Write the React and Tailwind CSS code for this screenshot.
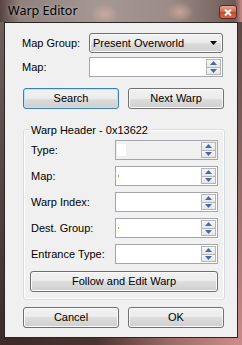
import React from "react";

const font = { fontFamily: '"Liberation Sans", Arial, sans-serif' };

function Btn({ children, w, blue }) {
  return (
    <div
      className={`flex h-[21px] items-center justify-center rounded-[3px] border text-[11px] text-black ${
        blue
          ? "border-[#3c7fb1] shadow-[inset_0_0_0_1px_#bfe3f6]"
          : "border-[#707070] shadow-[inset_0_0_0_1px_#fbfbfb]"
      } bg-[linear-gradient(180deg,#f2f2f2_0%,#ebebeb_50%,#dddddd_50%,#cfcfcf_100%)]`}
      style={{ width: w }}
    >
      {children}
    </div>
  );
}

function Up() {
  return (
    <svg width="7" height="4" viewBox="0 0 7 4">
      <polygon points="0,4 7,4 3.5,0" fill="#4a68a8" />
    </svg>
  );
}
function Down() {
  return (
    <svg width="7" height="4" viewBox="0 0 7 4">
      <polygon points="0,0 7,0 3.5,4" fill="#4a68a8" />
    </svg>
  );
}

function Spin({ w, gray, square, tick }) {
  return (
    <div
      className={`relative flex h-[20px] border border-[#a3a6ad] ${gray ? "bg-[#f0f0f0]" : "bg-white"}`}
      style={{ width: w }}
    >
      <div className="flex flex-1 items-center pl-[1px]">
        {square && <div className="h-[12px] w-[9px] bg-white" />}
        {tick && <div className="ml-[1px] h-[2px] w-[1px] bg-[#e0a030]" />}
      </div>
      <div className="mr-[1px] my-[1px] flex w-[15px] flex-col">
        <div className="flex flex-1 items-center justify-center border border-[#b5b5b5] bg-[linear-gradient(180deg,#f6f6f6,#e6e6e6)]">
          <Up />
        </div>
        <div className="flex flex-1 items-center justify-center border border-t-0 border-[#b5b5b5] bg-[linear-gradient(180deg,#f6f6f6,#e6e6e6)]">
          <Down />
        </div>
      </div>
    </div>
  );
}

function Row({ label, ...p }) {
  return (
    <div className="flex h-[20px] items-center">
      <div className="w-[84px] text-[11px] text-black">{label}</div>
      <Spin w={104} {...p} />
    </div>
  );
}

export default function App() {
  return (
    <div
      className="relative h-[345px] w-[242px] overflow-hidden bg-[radial-gradient(ellipse_14px_10px_at_105px_14px,#c9a99c,transparent),radial-gradient(ellipse_14px_10px_at_180px_12px,#c7a497,transparent),linear-gradient(90deg,#564442_0%,#8e807b_8%,#a59893_40%,#9c8b86_70%,#6e5b57_97%,#c98a88_100%)]"
      style={font}
    >
      <div className="absolute inset-x-0 bottom-0 h-[8px] bg-[linear-gradient(90deg,#3a2925_0%,#4a3430_40%,#9b6a66_70%,#d08c8a_100%)]" />
      <div className="absolute left-0 top-[22px] bottom-0 w-[4px] bg-[linear-gradient(180deg,#6f605c,#3b2a26)]" />
      <div className="absolute right-0 top-[22px] bottom-0 w-[4px] bg-[linear-gradient(180deg,#5a4743,#c98a88)]" />
      {/* title bar */}
      <div className="relative flex h-[22px] items-center pl-[8px]">
        <span
          className="text-[12.5px] text-black"
          style={{ fontFamily: '"Noto Sans", "Open Sans", sans-serif', textShadow: "0 0 4px rgba(255,255,255,0.45)" }}
        >
          Warp Editor
        </span>
        <div className="absolute left-[219px] top-[5px] flex h-[14px] w-[18px] items-center justify-center rounded-[3px] border border-[#5a2820] bg-[linear-gradient(180deg,#e7a590_0%,#d3654c_50%,#c14a30_51%,#d8684a_100%)]">
          <svg width="8" height="7" viewBox="0 0 8 7">
            <path d="M1 0.5 L7 6.5 M7 0.5 L1 6.5" stroke="white" strokeWidth="2" />
          </svg>
        </div>
      </div>
      {/* client */}
      <div className="relative ml-[4px] h-[316px] w-[234px] border border-[#2a2624] bg-[#f0f0f0]">
        <div className="flex flex-col pl-[18px] pt-[10px]">
          <div className="flex h-[20px] items-center">
            <div className="-ml-[1px] w-[67px] text-[11px] text-black">Map Group:</div>
            <div className="flex h-[20px] w-[134px] items-center justify-between rounded-[3px] border border-[#707070] bg-[linear-gradient(180deg,#f2f2f2_0%,#ebebeb_50%,#dddddd_50%,#cfcfcf_100%)] pl-[3px] pr-[5px] text-[11px] text-black shadow-[inset_0_0_0_1px_#fbfbfb]">
              <span>Present Overworld</span>
              <svg width="7" height="4" viewBox="0 0 7 4">
                <polygon points="0,0 7,0 3.5,4" fill="#000" />
              </svg>
            </div>
          </div>
          <div className="mt-[4px] flex h-[20px] items-center">
            <div className="-ml-[1px] w-[67px] text-[11px] text-black">Map:</div>
            <Spin w={134} />
          </div>
          <div className="mt-[11px] flex gap-[9px]">
            <Btn w={96} blue>Search</Btn>
            <Btn w={96}>Next Warp</Btn>
          </div>
          <div className="relative mt-[20px] w-[202px] rounded-[3px] border border-[#d5dfe5] px-[6px] pb-[7px] pt-[10px] shadow-[inset_0_0_0_1px_#ffffff]">
            <div className="absolute left-[6px] top-[-8px] bg-[#f0f0f0] px-[1px] text-[11px] text-black">
              Warp Header - 0x13622
            </div>
            <div className="flex flex-col gap-[6px] pl-[1px]">
              <Row label="Type:" gray square />
              <Row label="Map:" tick />
              <Row label="Warp Index:" />
              <Row label="Dest. Group:" tick />
              <Row label="Entrance Type:" />
            </div>
            <div className="mt-[7px] flex">
              <Btn w={190}>Follow and Edit Warp</Btn>
            </div>
          </div>
          <div className="mt-[7px] flex gap-[9px]">
            <Btn w={96}>Cancel</Btn>
            <Btn w={96}>OK</Btn>
          </div>
        </div>
      </div>
    </div>
  );
}
